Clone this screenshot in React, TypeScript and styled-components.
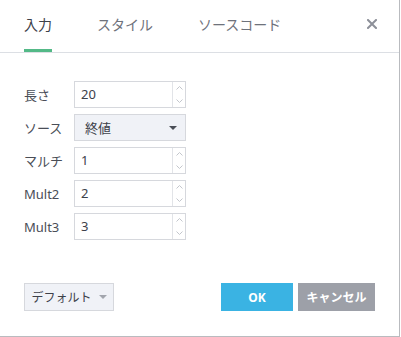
import styled, { createGlobalStyle } from "styled-components";

const GlobalStyle = createGlobalStyle`
  html, body {
    margin: 0;
    padding: 0;
    background: #ffffff;
  }
  body {
    font-family: "Noto Sans", "Noto Sans CJK JP", sans-serif;
  }
`;

type Field = { label: string; value: string; kind: "number" | "select" };

const fields: Field[] = [
  { label: "長さ", value: "20", kind: "number" },
  { label: "ソース", value: "終値", kind: "select" },
  { label: "マルチ", value: "1", kind: "number" },
  { label: "Mult2", value: "2", kind: "number" },
  { label: "Mult3", value: "3", kind: "number" },
];

const tabs = ["入力", "スタイル", "ソースコード"];

const App = () => {
  return (
    <>
      <GlobalStyle />
      <Dialog>
        <Header>
          <TabList>
            {tabs.map((t, i) => (
              <Tab key={t} $active={i === 0}>
                {t}
              </Tab>
            ))}
          </TabList>
          <Close aria-label="close">
            <svg width="10" height="10" viewBox="0 0 10 10">
              <path
                d="M1 1 L9 9 M9 1 L1 9"
                stroke="#8d9099"
                strokeWidth="2"
                strokeLinecap="square"
              />
            </svg>
          </Close>
        </Header>

        <Body>
          {fields.map((f) => (
            <Row key={f.label}>
              <Label>{f.label}</Label>
              {f.kind === "select" ? (
                <Select>
                  <span>{f.value}</span>
                  <Caret $color="#4a4e57" />
                </Select>
              ) : (
                <NumberBox>
                  <Value>{f.value}</Value>
                  <Spinner>
                    <SpinHalf>
                      <svg width="7" height="4" viewBox="0 0 7 4">
                        <path d="M0.5 3.5 L3.5 0.5 L6.5 3.5" fill="none" stroke="#c3c6cc" />
                      </svg>
                    </SpinHalf>
                    <SpinHalf>
                      <svg width="7" height="4" viewBox="0 0 7 4">
                        <path d="M0.5 0.5 L3.5 3.5 L6.5 0.5" fill="none" stroke="#c3c6cc" />
                      </svg>
                    </SpinHalf>
                  </Spinner>
                </NumberBox>
              )}
            </Row>
          ))}
        </Body>

        <Footer>
          <DefaultButton>
            デフォルト
            <Caret $color="#a2a5ad" />
          </DefaultButton>
          <Actions>
            <ActionButton $bg="#3ab3e3" $size={12}>
              OK
            </ActionButton>
            <ActionButton $bg="#9da0a8" $size={12}>
              キャンセル
            </ActionButton>
          </Actions>
        </Footer>
      </Dialog>
    </>
  );
};

export default App;

const Dialog = styled.div`
  width: 400px;
  height: 337px;
  box-sizing: border-box;
  border-right: 1px solid #b9bbbf;
  border-bottom: 1px solid #b9bbbf;
  background: #ffffff;
  display: flex;
  flex-direction: column;
`;

const Header = styled.div`
  height: 52px;
  border-bottom: 1px solid #dcdfe4;
  display: flex;
  justify-content: space-between;
  padding: 0 22px 0 24px;
`;

const TabList = styled.div`
  display: flex;
  gap: 45px;
`;

const Tab = styled.div<{ $active: boolean }>`
  font-size: 14px;
  line-height: 20px;
  padding-top: 15px;
  height: 52px;
  box-sizing: border-box;
  margin-bottom: -1px;
  color: ${(p) => (p.$active ? "#3d414a" : "#6e727b")};
  border-bottom: 3px solid ${(p) => (p.$active ? "#53b987" : "transparent")};
`;

const Close = styled.div`
  padding-top: 19px;
  width: 10px;
  svg {
    display: block;
  }
`;

const Body = styled.div`
  padding: 28px 0 0 24px;
  display: flex;
  flex-direction: column;
  gap: 6px;
`;

const Row = styled.div`
  display: flex;
  align-items: center;
  height: 27px;
`;

const Label = styled.div`
  width: 50px;
  font-size: 13px;
  color: #4a4e57;
`;

const NumberBox = styled.div`
  width: 112px;
  height: 27px;
  box-sizing: border-box;
  border: 1px solid #d6d8dd;
  display: flex;
`;

const Value = styled.div`
  flex: 1;
  padding-left: 6px;
  font-size: 13px;
  line-height: 25px;
  color: #3d414a;
`;

const Spinner = styled.div`
  width: 12px;
  border-left: 1px solid #e2e4e8;
  display: flex;
  flex-direction: column;
`;

const SpinHalf = styled.div`
  flex: 1;
  display: flex;
  align-items: center;
  justify-content: center;
`;

const Select = styled.div`
  width: 112px;
  height: 27px;
  box-sizing: border-box;
  border: 1px solid #d6d8dd;
  background: #f0f2f7;
  display: flex;
  align-items: center;
  justify-content: space-between;
  padding: 0 8px 0 10px;
  font-size: 13px;
  color: #3d414a;
`;

const Caret = styled.span<{ $color: string }>`
  width: 0;
  height: 0;
  border-left: 4px solid transparent;
  border-right: 4px solid transparent;
  border-top: 4px solid ${(p) => p.$color};
`;

const Footer = styled.div`
  margin-top: auto;
  padding: 0 24px 25px 24px;
  display: flex;
  justify-content: space-between;
  align-items: center;
`;

const DefaultButton = styled.div`
  width: 90px;
  height: 28px;
  box-sizing: border-box;
  border: 1px solid #d6d8dd;
  background: #f0f2f7;
  display: flex;
  align-items: center;
  justify-content: center;
  gap: 7px;
  font-size: 12px;
  color: #3d414a;
`;

const Actions = styled.div`
  display: flex;
  gap: 5px;
`;

const ActionButton = styled.div<{ $bg: string; $size: number }>`
  height: 28px;
  min-width: 72px;
  padding: 0 6px;
  box-sizing: border-box;
  background: ${(p) => p.$bg};
  color: #ffffff;
  font-size: ${(p) => p.$size}px;
  font-weight: 700;
  display: flex;
  align-items: center;
  justify-content: center;
  &:last-child {
    min-width: 77px;
  }
`;
